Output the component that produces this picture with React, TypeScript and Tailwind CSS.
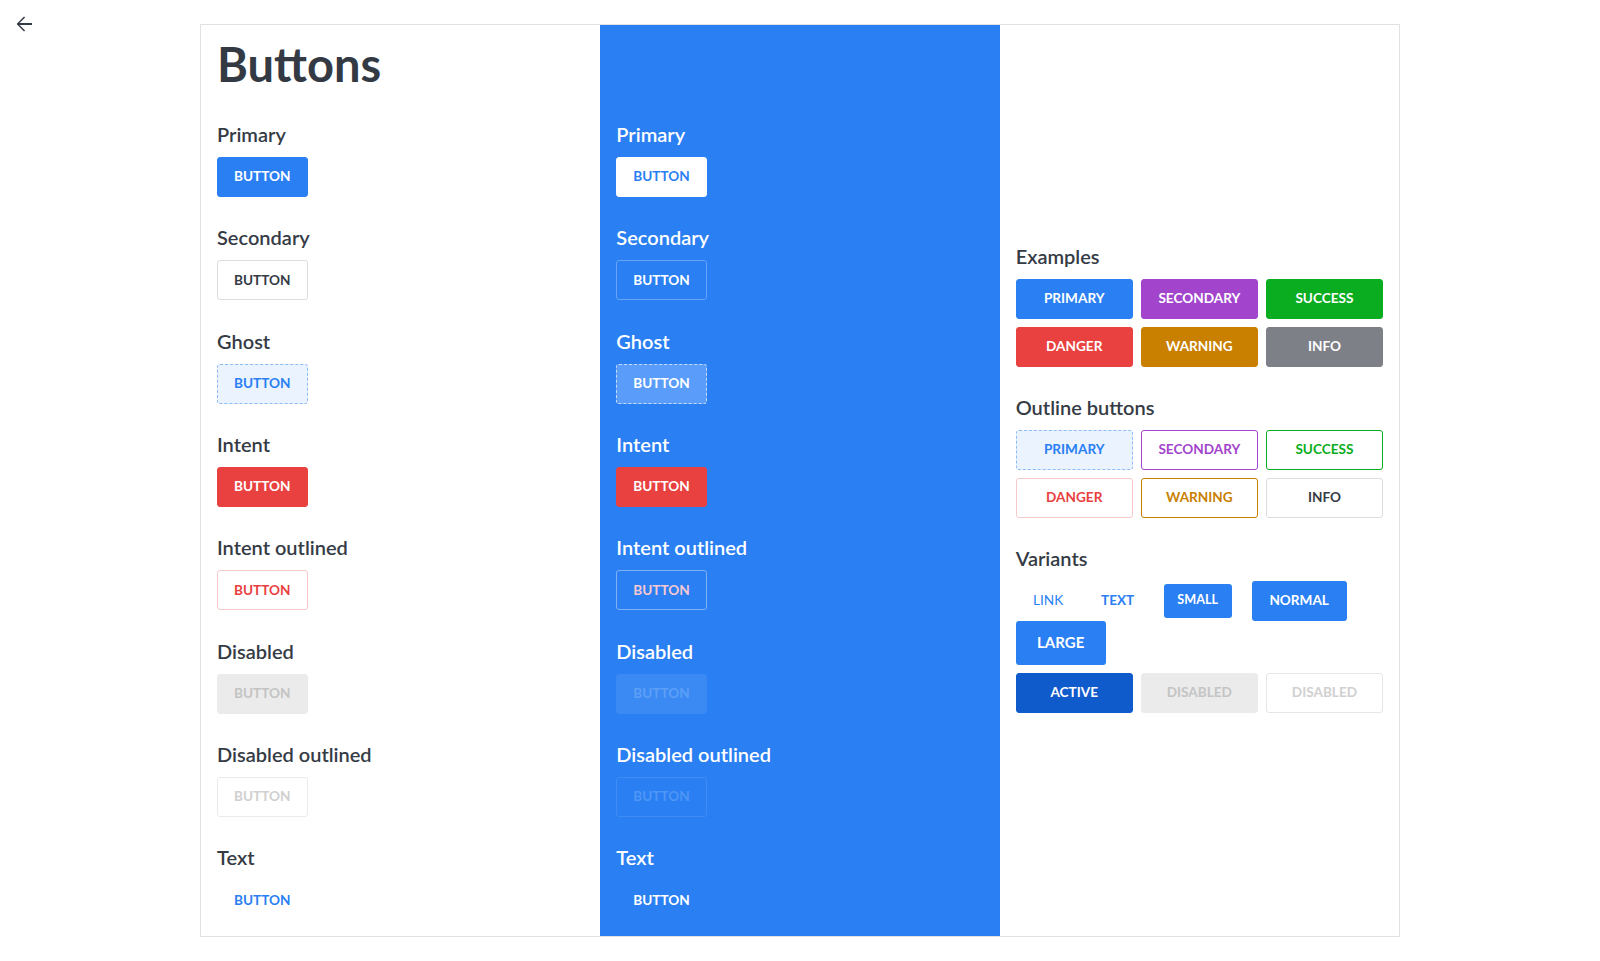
import React from "react"

type Demo = { label: string; cls: string }

const base =
  "inline-flex h-10 items-center justify-center rounded-[3px] border px-4 pb-px text-[13.6px] font-bold uppercase"

const lightDemos: Demo[] = [
  { label: "Primary", cls: "border-[#2a7ff3] bg-[#2a7ff3] text-white" },
  { label: "Secondary", cls: "border-[#dcdde0] bg-white text-[#353b45]" },
  { label: "Ghost", cls: "border-dashed border-[#8dbbf6] bg-[#eaf3fe] text-[#2a7ff3]" },
  { label: "Intent", cls: "border-[#e94040] bg-[#e94040] text-white" },
  { label: "Intent outlined", cls: "border-[#f8c9c9] bg-white text-[#e93f3f]" },
  { label: "Disabled", cls: "border-[#ebebeb] bg-[#ebebeb] text-[#c4c4c4]" },
  { label: "Disabled outlined", cls: "border-[#ebebeb] bg-white text-[#d0d0d0]" },
  { label: "Text", cls: "border-transparent text-[#2a7ff3]" },
]

const darkDemos: Demo[] = [
  { label: "Primary", cls: "border-white bg-white text-[#2a7ff3]" },
  { label: "Secondary", cls: "border-[#66a3f6] text-white" },
  { label: "Ghost", cls: "border-dashed border-[#c4dbfc] bg-[#5a9cfa] text-white" },
  { label: "Intent", cls: "border-[#e94040] bg-[#e94040] text-white" },
  { label: "Intent outlined", cls: "border-[#80b0f5] text-[#f7c9d2]" },
  { label: "Disabled", cls: "border-[#3b8af4] bg-[#3b8af4] text-[#5c9ff7]" },
  { label: "Disabled outlined", cls: "border-[#3e8cf4] text-[#4f96f6]" },
  { label: "Text", cls: "border-transparent text-white" },
]

function DemoList({ demos, dark }: { demos: Demo[]; dark?: boolean }) {
  return (
    <div className="flex flex-col">
      {demos.map((d, i) => (
        <section key={d.label} className={i === 0 ? "" : "mt-[26.33px]"}>
          <h3
            className={`mb-2 text-xl font-semibold leading-[29px] ${
              dark ? "text-white" : "text-[#353b45]"
            }`}
          >
            {d.label}
          </h3>
          <button className={`${base} ${d.cls}`}>Button</button>
        </section>
      ))}
    </div>
  )
}

const examples = [
  { text: "Primary", cls: "border-[#2a7ff3] bg-[#2a7ff3] text-white" },
  { text: "Secondary", cls: "border-[#a245cc] bg-[#a245cc] text-white" },
  { text: "Success", cls: "border-[#0aad20] bg-[#0aad20] text-white" },
  { text: "Danger", cls: "border-[#e94040] bg-[#e94040] text-white" },
  { text: "Warning", cls: "border-[#c98000] bg-[#c98000] text-white" },
  { text: "Info", cls: "border-[#7e8088] bg-[#7e8088] text-white" },
]

const outlines = [
  { text: "Primary", cls: "border-dashed border-[#8dbbf6] bg-[#eaf3fe] text-[#2a7ff3]" },
  { text: "Secondary", cls: "border-[#a245cc] bg-white text-[#a245cc]" },
  { text: "Success", cls: "border-[#0aad20] bg-white text-[#0aad20]" },
  { text: "Danger", cls: "border-[#f8c9c9] bg-white text-[#e93f3f]" },
  { text: "Warning", cls: "border-[#c98000] bg-white text-[#c98000]" },
  { text: "Info", cls: "border-[#dcdde0] bg-white text-[#353b45]" },
]

function Heading({ children, className = "" }: { children: React.ReactNode; className?: string }) {
  return (
    <h3 className={`mb-2 text-xl font-semibold leading-[29px] text-[#353b45] ${className}`}>
      {children}
    </h3>
  )
}

function ArrowBack() {
  return (
    <svg viewBox="0 0 24 24" className="h-6 w-6" fill="#353b45">
      <path d="M20 11.1H7.6l5.5-5.5-1.1-1.1-7.4 7.5 7.4 7.5 1.1-1.1-5.5-5.5H20z" />
    </svg>
  )
}

export default function App() {
  return (
    <div className="relative min-h-[961px] bg-white pt-6 font-['Lato','Open_Sans',sans-serif]">
      <button className="absolute left-3 top-3">
        <ArrowBack />
      </button>

      <div className="mx-auto grid w-[1200px] grid-cols-3 border border-[#e1e2e6]">
        <div className="px-4 pb-4 pt-[15px]">
          <h1 className="mb-8 text-[47px] font-bold leading-[48px] text-[#333a44]">Buttons</h1>
          <DemoList demos={lightDemos} />
        </div>

        <div className="bg-[#2a7ff3] px-4 pb-4 pt-[15px]">
          <div className="mb-8 h-12" />
          <DemoList demos={darkDemos} dark />
        </div>

        <div className="flex flex-col justify-center px-4 pb-[22px] pt-4">
          <Heading>Examples</Heading>
          <div className="grid grid-cols-3 gap-2">
            {examples.map((b) => (
              <button key={b.text} className={`${base} w-full ${b.cls}`}>
                {b.text}
              </button>
            ))}
          </div>

          <Heading className="mt-[26px]">Outline buttons</Heading>
          <div className="grid grid-cols-3 gap-2">
            {outlines.map((b) => (
              <button key={b.text} className={`${base} w-full ${b.cls}`}>
                {b.text}
              </button>
            ))}
          </div>

          <Heading className="mt-[26px]">Variants</Heading>
          <div className="flex flex-wrap items-center">
            <button className="inline-flex h-10 w-[65px] items-center justify-center pb-px text-[13.6px] font-normal text-[#2a7ff3]">
              LINK
            </button>
            <button className="ml-[3px] inline-flex h-10 w-[68px] items-center justify-center pb-px text-[13.6px] font-bold text-[#2a7ff3]">
              TEXT
            </button>
            <button className="ml-3 inline-flex h-[34px] w-[68px] items-center justify-center rounded-[3px] bg-[#2a7ff3] pb-px text-[12.6px] font-bold text-white">
              SMALL
            </button>
            <button className="ml-5 inline-flex h-10 w-[95px] items-center justify-center rounded-[3px] bg-[#2a7ff3] pb-px text-[13.6px] font-bold text-white">
              NORMAL
            </button>
            <button className="inline-flex h-11 w-[90px] items-center justify-center rounded-[3px] bg-[#2a7ff3] pb-px text-[15px] font-bold text-white">
              LARGE
            </button>
          </div>
          <div className="mt-2 grid grid-cols-3 gap-2">
            <button className={`${base} w-full border-[#0f5bcc] bg-[#0f5bcc] text-white`}>Active</button>
            <button className={`${base} w-full border-[#ebebeb] bg-[#ebebeb] text-[#c4c4c4]`}>
              Disabled
            </button>
            <button className={`${base} w-full border-[#e6e6e6] bg-white text-[#d0d0d0]`}>
              Disabled
            </button>
          </div>
        </div>
      </div>
    </div>
  )
}
